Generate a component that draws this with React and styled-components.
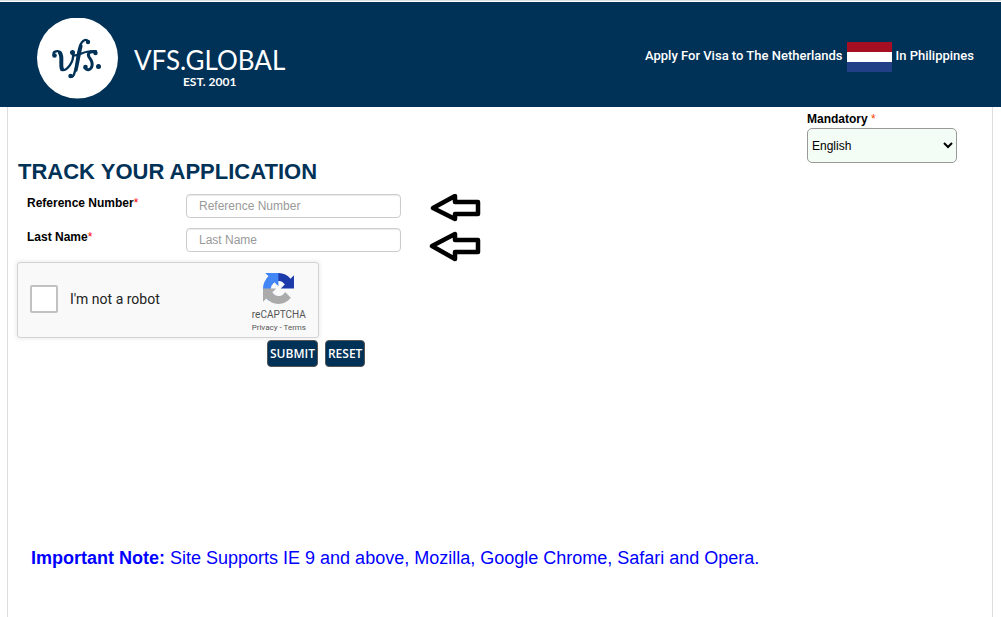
import React, { useState } from 'react';
import styled, { createGlobalStyle } from 'styled-components';

const GlobalStyle = createGlobalStyle`
  * {
    box-sizing: border-box;
  }

  body {
    margin: 0;
    background: #fff;
    color: #000;
    font-family: "Liberation Sans", Arial, sans-serif;
    font-size: 12px;
    line-height: 16px;
  }
`;

const Page = styled.div`
  display: flex;
  flex-direction: column;
  min-height: 100vh;
  border-top: 1px solid #dcdfe2;
  padding-top: 1px;
`;

const Header = styled.header`
  display: flex;
  align-items: flex-start;
  justify-content: space-between;
  height: 105px;
  padding: 16px 27px 0 37px;
  background: #003157;
  color: #fff;
`;

const Brand = styled.a`
  display: flex;
  gap: 16px;
  color: #fff;
  text-decoration: none;
`;

const BrandText = styled.div`
  display: flex;
  flex-direction: column;
  align-items: center;
  padding-top: 28px;
`;

const BrandName = styled.span`
  font-family: Lato, sans-serif;
  font-size: 26px;
  line-height: 28px;
`;

const BrandYear = styled.span`
  font-family: Lato, sans-serif;
  font-size: 12px;
  font-weight: 700;
  line-height: 16px;
`;

const Destination = styled.div`
  display: flex;
  align-items: center;
  gap: 4px;
  padding-top: 24px;
  font-family: Roboto, sans-serif;
  font-size: 13px;
  font-weight: 500;

  span {
    padding-bottom: 2px;
  }
`;

const Flag = styled.div`
  width: 45px;
  height: 30px;
  background: linear-gradient(#a50f21 33.3%, #fff 33.3% 66.6%, #203f87 66.6%);
`;

const Main = styled.main`
  flex: 1;
  display: flex;
  flex-direction: column;
  margin: 0 8px 0 7px;
  padding: 4px 9px 0;
  border: solid #ddd;
  border-width: 0 1px;
`;

const Language = styled.div`
  display: flex;
  flex-direction: column;
  align-self: flex-end;
  width: 150px;
  margin-right: 26px;
  gap: 1px;
`;

const Label = styled.label`
  font-weight: 700;
`;

const Star = styled.span`
  color: ${(props) => props.$color || '#f00'};
  font-weight: 400;
`;

const Select = styled.select`
  width: 100%;
  height: 35px;
  border: 1px solid #999;
  border-radius: 5px;
  background-color: #f3fcf5;
  color: #000;
  font: inherit;
`;

const Title = styled.h1`
  margin: -3px 0 10px 1px;
  color: #003157;
  font-size: 22px;
  line-height: 24px;
`;

const Form = styled.form`
  display: flex;
  flex-direction: column;
  align-items: flex-start;
`;

const Row = styled.div`
  display: flex;
  align-items: flex-start;
  height: 34px;
  padding-left: 10px;

  label {
    width: 159px;
    padding-top: 1px;
  }

  svg {
    flex: none;
    margin-left: 28px;
  }
`;

const Input = styled.input`
  width: 215px;
  height: 24px;
  padding: 0 12px;
  border: 1px solid #ccc;
  border-radius: 4px;
  box-shadow: inset 0 1px 1px rgba(0, 0, 0, 0.08);
  font: inherit;

  &::placeholder {
    color: #999;
  }
`;

const Captcha = styled.div`
  display: flex;
  justify-content: space-between;
  width: 302px;
  height: 76px;
  padding: 8px 12px 0;
  border: 1px solid #d3d3d3;
  border-radius: 3px;
  background: #f9f9f9;
  box-shadow: 0 0 4px 1px rgba(0, 0, 0, 0.08);
  font-family: Roboto, sans-serif;
`;

const RobotCheck = styled.label`
  display: flex;
  align-items: center;
  gap: 12px;
  height: 56px;
  color: #222;
  font-size: 14px;

  input {
    appearance: none;
    width: 28px;
    height: 28px;
    margin: 0;
    border: 2px solid #c1c1c1;
    border-radius: 2px;
    background: #fff;
  }

  input:checked {
    background: #4285f4;
  }
`;

const CaptchaBrand = styled.div`
  display: flex;
  flex-direction: column;
  align-items: center;
  color: #555;
  font-size: 10px;
  line-height: 12px;

  svg {
    margin: 2px 0 5px;
  }
`;

const CaptchaLinks = styled.div`
  padding-top: 1px;
  font-size: 8px;

  a {
    color: inherit;
    text-decoration: none;
  }
`;

const Buttons = styled.div`
  display: flex;
  gap: 7px;
  margin: 2px 0 0 250px;
`;

const Button = styled.button`
  height: 27px;
  padding: 0 2px;
  border: 1px solid #555;
  border-radius: 4px;
  background: #003157;
  color: #fff;
  font-family: "Open Sans", sans-serif;
  font-size: 12px;
  font-weight: 600;
`;

const Note = styled.p`
  margin: 179px 0 0 14px;
  color: #00f;
  font-size: 18px;
  line-height: 24px;
`;

const BrandMark = () => (
  <svg width="81" height="81" viewBox="0 0 81 81" fill="none" aria-hidden="true">
    <circle cx="40.5" cy="40" r="40.5" fill="#fff" />
    <g stroke="#003157" strokeLinecap="round" strokeLinejoin="round">
      <path d="M17 37c-2-3 3-5 6-3" strokeWidth="2.4" />
      <path d="M23 35c3 4 0 12 2 16" strokeWidth="4" />
      <path d="M25 52c5 1 12-8 11-16" strokeWidth="2.4" />
      <path d="M51 24c-1-4-6-2-8 4-3 9-3 18-5 25-1 5-3 7-5 5" strokeWidth="2.4" />
      <path d="M44 28c-2 8-3 16-5 24" strokeWidth="3.2" />
      <path d="M36 37c4 2 8-2 13-3 4-1 7-1 10-1" strokeWidth="2.2" />
      <path d="M58 34c-5-1-8 1-6 5 2 3 4 5 3 9-1 4-5 5-7 2" strokeWidth="3" />
    </g>
    <g fill="#003157">
      <circle cx="51" cy="24" r="2.2" />
      <circle cx="17.500" cy="37.500" r="2.300" />
      <circle cx="35.500" cy="34.500" r="2.500" />
      <circle cx="33.500" cy="58" r="2.200" />
      <circle cx="58.500" cy="35" r="2.200" />
      <circle cx="48.500" cy="49" r="2.300" />
      <circle cx="61.500" cy="48.500" r="2.500" />
    </g>
  </svg>
);

const CaptchaLogo = () => (
  <svg width="31" height="31" viewBox="0 0 64 64" aria-hidden="true">
    <path
      fill="#1c3aa9"
      d="M64 31.955l-.033-1.37V4.687l-7.16 7.16C50.948 4.674 42.033.093 32.05.093c-10.4 0-19.622 4.96-25.458 12.64l11.736 11.86a15.55 15.55 0 0 1 4.754-5.334c2.05-1.6 4.952-2.906 8.968-2.906.485 0 .86.057 1.135.163 4.976.393 9.288 3.14 11.828 7.124l-8.307 8.307L64 31.953"
    />
    <path
      fill="#4285f4"
      d="M31.862.094l-1.37.033H4.594l7.16 7.16C4.58 13.147 0 22.06 0 32.046c0 10.4 4.96 19.622 12.64 25.458L24.5 45.768a15.55 15.55 0 0 1-5.334-4.754c-1.6-2.05-2.906-4.952-2.906-8.968 0-.485.057-.86.163-1.135.393-4.976 3.14-9.288 7.124-11.828l8.307 8.307L31.86.095"
    />
    <path
      fill="#ababab"
      d="M.001 32.045l.033 1.37v25.898l7.16-7.16c5.86 7.173 14.774 11.754 24.76 11.754 10.4 0 19.622-4.96 25.458-12.64l-11.736-11.86a15.55 15.55 0 0 1-4.754 5.334c-2.05 1.6-4.952 2.906-8.968 2.906-.485 0-.86-.057-1.135-.163-4.976-.393-9.288-3.14-11.828-7.124l8.307-8.307L.001 32.047"
    />
  </svg>
);

const Arrow = ({ d }) => (
  <svg width="52" height="34" viewBox="0 0 52 34" fill="none" aria-hidden="true">
    <path d={d} stroke="#000" strokeWidth="4.5" strokeLinejoin="round" />
  </svg>
);

const fields = [
  {
    id: 'reference',
    label: 'Reference Number',
    arrow: 'M4 14L26 2v6H49v12H26v5z',
  },
  {
    id: 'lastName',
    label: 'Last Name',
    arrow: 'M3 18L26 6v6H49v12H26v7z',
  },
];

const App = () => {

  const [values, setValues] = useState({ reference: '', lastName: '' })

  const handleChange = (e) => {
    setValues({ ...values, [e.target.id]: e.target.value });
  };

  return (
    <Page>
      <GlobalStyle />
      <Header>
        <Brand href="#">
          <BrandMark />
          <BrandText>
            <BrandName>VFS.GLOBAL</BrandName>
            <BrandYear>EST. 2001</BrandYear>
          </BrandText>
        </Brand>
        <Destination>
          <span>Apply For Visa to The Netherlands</span>
          <Flag />
          <span>In Philippines</span>
        </Destination>
      </Header>

      <Main>
        <Language>
          <Label htmlFor="language">
            Mandatory <Star $color="#ff4500">*</Star>
          </Label>
          <Select id="language">
            <option>English</option>
          </Select>
        </Language>

        <Title>TRACK YOUR APPLICATION</Title>

        <Form
          onSubmit={(e) => e.preventDefault()}
          onReset={() => setValues({ reference: '', lastName: '' })}
        >
          {fields.map((field) => (
            <Row key={field.id}>
              <Label htmlFor={field.id}>
                {field.label}<Star>*</Star>
              </Label>
              <Input
                id={field.id}
                placeholder={field.label}
                value={values[field.id]}
                onChange={handleChange}
              />
              <Arrow d={field.arrow} />
            </Row>
          ))}

          <Captcha>
            <RobotCheck>
              <input type="checkbox" />
              I'm not a robot
            </RobotCheck>
            <CaptchaBrand>
              <CaptchaLogo />
              reCAPTCHA
              <CaptchaLinks>
                <a href="#">Privacy</a> - <a href="#">Terms</a>
              </CaptchaLinks>
            </CaptchaBrand>
          </Captcha>

          <Buttons>
            <Button type="submit">SUBMIT</Button>
            <Button type="reset">RESET</Button>
          </Buttons>
        </Form>

        <Note>
          <strong>Important Note:</strong> Site Supports IE 9 and above, Mozilla, Google Chrome, Safari and Opera.
        </Note>
      </Main>
    </Page>
  );
};

export default App;
